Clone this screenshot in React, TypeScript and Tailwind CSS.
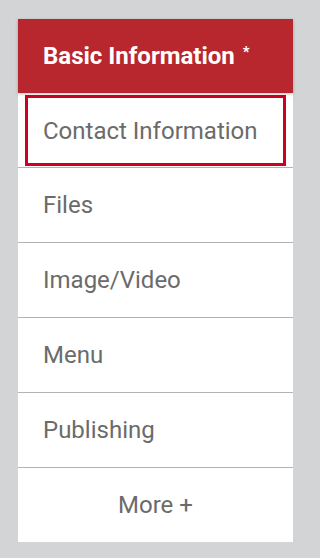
import React from "react";

const items = ["Files", "Image/Video", "Menu", "Publishing"];

export default function App() {
  return (
    <div className="min-h-[558px] w-full bg-[#d3d4d6] pt-[19px] pl-[18px] font-['Roboto',sans-serif]">
      <div className="w-[275px] bg-white flex flex-col">
        {/* active tab */}
        <div className="h-[74px] bg-[#b8262e] flex items-center pl-[25px] shadow-[0_1px_3px_rgba(0,0,0,0.25)] relative z-10">
          <span className="text-white font-bold text-[24px] leading-none">Basic Information</span>
          <span className="text-white font-bold text-[15px] ml-[8px] -mt-[8px] leading-none">*</span>
        </div>

        {/* focused tab */}
        <div className="h-[74px] flex items-stretch px-[7px] pt-[2px] pb-[1px]">
          <div className="flex-1 border-[3px] border-[#cc0022] flex items-center pl-[15px]">
            <span className="text-[#6b6b6b] text-[24px] leading-none">Contact Information</span>
          </div>
        </div>

        {items.map((label) => (
          <div
            key={label}
            className="h-[75px] border-t border-[#b3b3b3] flex items-center pl-[25px]"
          >
            <span className="text-[#6b6b6b] text-[24px] leading-none">{label}</span>
          </div>
        ))}

        <div className="h-[75px] border-t border-[#b3b3b3] flex items-center justify-center">
          <span className="text-[#6b6b6b] text-[24px] leading-none">More +</span>
        </div>
      </div>
    </div>
  );
}
